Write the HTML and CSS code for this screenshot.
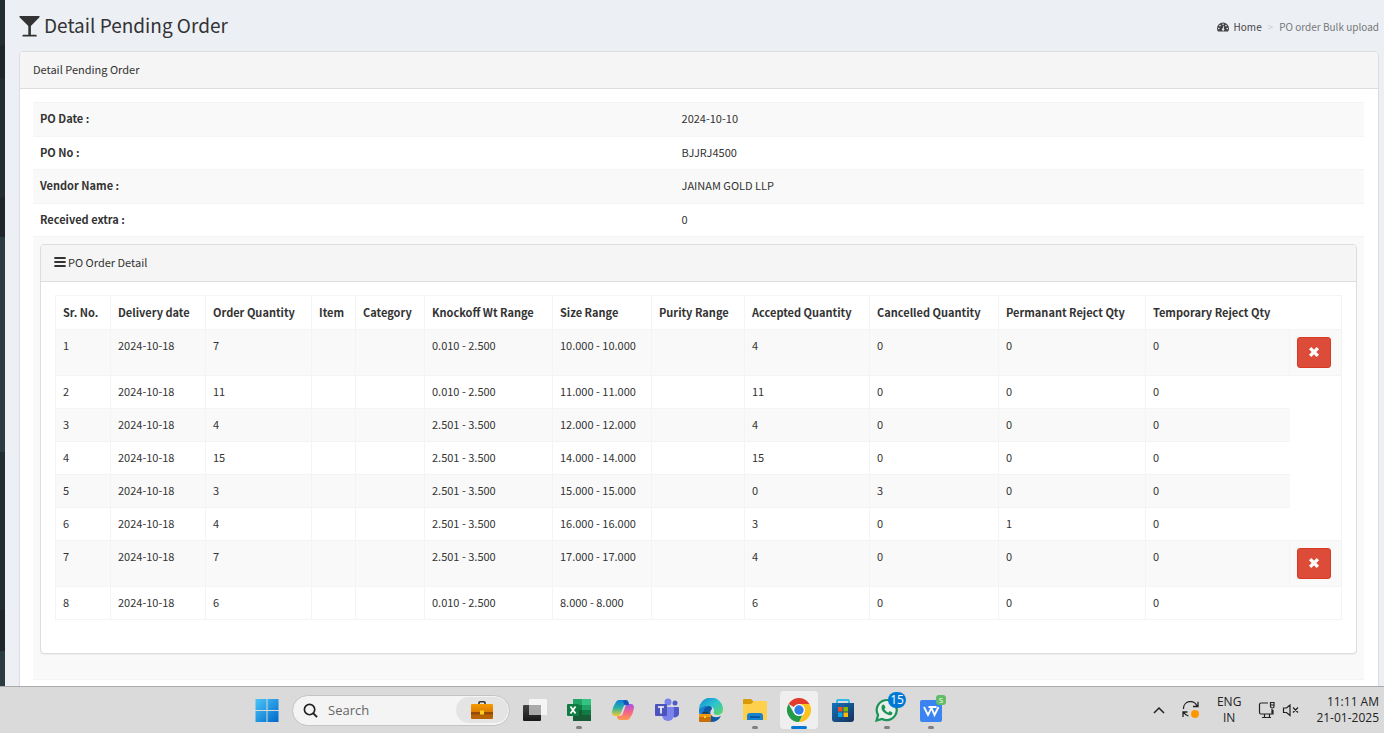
FILE: index.html
```html
<!DOCTYPE html>
<html lang="en">
<head>
    <meta charset="UTF-8">
    <meta name="viewport" content="width=device-width, initial-scale=1.0">
    <title>Detail Pending Order</title>
    <link rel="stylesheet" href="styles.css">
</head>
<body>
    <div class="screen">
        <div class="wrapper">
            <aside class="sidebar">
                <div class="side-item item-1"></div>
                <div class="side-item item-2 active"></div>
                <div class="side-item item-3"></div>
                <div class="side-item item-4 active"></div>
                <div class="side-item item-5 sub"></div>
                <div class="side-item item-6"></div>
                <div class="side-item item-7 active"></div>
                <div class="side-item item-8 sub"></div>
            </aside>
            <main class="content">
                <section class="content-header">
                    <h1>
                        <svg class="icon-glass" viewBox="0 0 20 21"><path d="M0 0h20v1.2L11.4 10v8.8h4.8c.6 0 1 .4 1 1v.7H3v-.7c0-.6.4-1 1-1h4.8V10L0 1.200z" fill="#333"/></svg>
                        Detail Pending Order
                    </h1>
                    <ol class="breadcrumb">
                        <li>
                            <a href="#">
                                <svg class="icon-dash" viewBox="0 0 12 10"><path d="M6 0.500a6 6 0 0 0-6 6c0 1.100.3 2.200.9 3.100h10.200c.6-.9.9-2 .9-3.100a6 6 0 0 0-6-6z" fill="#444"/><g fill="#ecf0f5"><circle cx="1.800" cy="6.500" r=".8"/><circle cx="3" cy="3.600" r=".8"/><circle cx="6" cy="2.300" r=".8"/><circle cx="9" cy="3.600" r=".8"/><circle cx="10.200" cy="6.500" r=".8"/><path d="M6.500 3.800l.6.200-.4 2.400a1.200 1.200 0 1 1-.9-.1z"/></g></svg>
                                Home
                            </a>
                        </li>
                        <li class="current">PO order Bulk upload</li>
                    </ol>
                </section>

                <section class="panel">
                    <div class="panel-heading">Detail Pending Order</div>
                    <div class="panel-body">
                        <table class="info">
                            <tr><th>PO Date :</th><td>2024-10-10</td></tr>
                            <tr><th>PO No :</th><td>BJJRJ4500</td></tr>
                            <tr><th>Vendor Name :</th><td>JAINAM GOLD LLP</td></tr>
                            <tr><th>Received extra :</th><td>0</td></tr>
                        </table>
                        <div class="detail-row">
                            <div class="panel">
                                <div class="panel-heading">
                                    <svg class="icon-bars" viewBox="0 0 12 10"><path d="M.8 0h10.400q.5 0 .5.500v1q0 .5-.5.500H.8q-.5 0-.5-.5v-1Q.3 0 .8 0zM.8 4h10.400q.5 0 .5.500v1q0 .5-.5.500H.8q-.5 0-.5-.5v-1Q.3 4 .8 4zM.8 8h10.400q.5 0 .5.500v1q0 .5-.5.500H.8q-.5 0-.5-.5v-1Q.3 8 .8 8z" fill="#333"/></svg>
                                    PO Order Detail
                                </div>
                                <div class="panel-body order-body">
                                    <table class="orders">
                                        <colgroup>
                                            <col class="c-sr"><col class="c-date"><col class="c-qty"><col class="c-item"><col class="c-cat"><col class="c-knock"><col class="c-size"><col class="c-purity"><col class="c-acc"><col class="c-can"><col class="c-perm"><col class="c-temp"><col class="c-act">
                                        </colgroup>
                                        <thead>
                                            <tr>
                                                <th>Sr. No.</th><th>Delivery date</th><th>Order Quantity</th><th>Item</th><th>Category</th><th>Knockoff Wt Range</th><th>Size Range</th><th>Purity Range</th><th>Accepted Quantity</th><th>Cancelled Quantity</th><th>Permanant Reject Qty</th><th>Temporary Reject Qty</th>
                                            </tr>
                                        </thead>
                                        <tbody>
                                            <tr><td>1</td><td>2024-10-18</td><td>7</td><td></td><td></td><td>0.010 - 2.500</td><td>10.000 - 10.000</td><td></td><td>4</td><td>0</td><td>0</td><td>0</td><td class="action"><button class="btn-danger" type="button" aria-label="Cancel"><svg viewBox="0 0 10 10"><path d="M1.800 1.800l6.400 6.400M8.200 1.800L1.800 8.200" stroke="#fff" stroke-width="2.800"/></svg></button></td></tr>
                                            <tr><td>2</td><td>2024-10-18</td><td>11</td><td></td><td></td><td>0.010 - 2.500</td><td>11.000 - 11.000</td><td></td><td>11</td><td>0</td><td>0</td><td>0</td></tr>
                                            <tr><td>3</td><td>2024-10-18</td><td>4</td><td></td><td></td><td>2.501 - 3.500</td><td>12.000 - 12.000</td><td></td><td>4</td><td>0</td><td>0</td><td>0</td></tr>
                                            <tr><td>4</td><td>2024-10-18</td><td>15</td><td></td><td></td><td>2.501 - 3.500</td><td>14.000 - 14.000</td><td></td><td>15</td><td>0</td><td>0</td><td>0</td></tr>
                                            <tr><td>5</td><td>2024-10-18</td><td>3</td><td></td><td></td><td>2.501 - 3.500</td><td>15.000 - 15.000</td><td></td><td>0</td><td>3</td><td>0</td><td>0</td></tr>
                                            <tr><td>6</td><td>2024-10-18</td><td>4</td><td></td><td></td><td>2.501 - 3.500</td><td>16.000 - 16.000</td><td></td><td>3</td><td>0</td><td>1</td><td>0</td></tr>
                                            <tr><td>7</td><td>2024-10-18</td><td>7</td><td></td><td></td><td>2.501 - 3.500</td><td>17.000 - 17.000</td><td></td><td>4</td><td>0</td><td>0</td><td>0</td><td class="action"><button class="btn-danger" type="button" aria-label="Cancel"><svg viewBox="0 0 10 10"><path d="M1.800 1.800l6.400 6.400M8.200 1.800L1.800 8.200" stroke="#fff" stroke-width="2.800"/></svg></button></td></tr>
                                            <tr><td>8</td><td>2024-10-18</td><td>6</td><td></td><td></td><td>0.010 - 2.500</td><td>8.000 - 8.000</td><td></td><td>6</td><td>0</td><td>0</td><td>0</td></tr>
                                        </tbody>
                                    </table>
                                </div>
                            </div>
                        </div>
                    </div>
                </section>
            </main>
        </div>

        <footer class="taskbar">
            <div class="task-apps">
                <button class="app" type="button" aria-label="Start">
                    <svg viewBox="0 0 24 24"><defs><linearGradient id="win" x1="0" y1="0" x2="24" y2="24" gradientUnits="userSpaceOnUse"><stop offset="0" stop-color="#4cc9fb"/><stop offset="1" stop-color="#0067c8"/></linearGradient></defs><path d="M.5 1h11v11H.5zM12.500 1h11v11h-11zM.5 13h11v11H.5zM12.500 13h11v11h-11z" fill="url(#win)"/></svg>
                </button>
                <div class="search">
                    <svg class="icon-search" viewBox="0 0 16 16"><circle cx="7" cy="7" r="5.500" fill="none" stroke="#222" stroke-width="1.800"/><path d="M11 11l4 4" stroke="#222" stroke-width="2"/></svg>
                    <input type="text" placeholder="Search" aria-label="Search">
                    <span class="search-pill">
                        <svg viewBox="0 0 22 18"><defs><linearGradient id="bag" x1="0" y1="0" x2="0" y2="1"><stop offset="0" stop-color="#f79a00"/><stop offset="1" stop-color="#d97a00"/></linearGradient></defs><path d="M8 3.500V1.500Q8 .8 9 .8h4q1 0 1 .7v2" fill="none" stroke="#333" stroke-width="1.600"/><rect y="3" width="22" height="9" rx="1" fill="url(#bag)"/><path d="M0 11h22v6q0 1-1 1H1q-1 0-1-1z" fill="#b86206"/><path d="M0 11h22v2.500H0z" fill="#974a04"/><rect x="9" y="9.500" width="4" height="4" fill="#ffd21c"/></svg>
                    </span>
                </div>
                <button class="app" type="button" aria-label="Task view">
                    <svg viewBox="0 0 24 24"><defs><linearGradient id="tv" x1="0" y1="0" x2="0" y2="1"><stop offset="0" stop-color="#444"/><stop offset="1" stop-color="#181818"/></linearGradient></defs><rect y="7" width="18" height="16" rx="1" fill="url(#tv)"/><rect x="6" y="1" width="18" height="16" rx="1" fill="#f5f5f5"/><path d="M6 7h12v10H6z" fill="#aaa"/></svg>
                </button>
                <button class="app open" type="button" aria-label="Excel">
                    <svg viewBox="0 0 24 24"><path d="M6 1h9v22H6z" fill="#21a366"/><path d="M15 1h9v6h-9z" fill="#33c481"/><path d="M6 7h9v5H6z" fill="#107c41"/><path d="M15 7h9v5h-9z" fill="#21a366"/><path d="M6 12h9v11H6z" fill="#185c37"/><path d="M15 12h9v5h-9z" fill="#107c41"/><path d="M15 17h9v6h-9z" fill="#185c37"/><rect y="6" width="12" height="12" rx="1" fill="#107c41"/><path d="M3.500 8.500l5 7M8.500 8.500l-5 7" stroke="#fff" stroke-width="1.800"/></svg>
                </button>
                <button class="app" type="button" aria-label="Copilot">
                    <svg viewBox="0 0 24 24"><defs><linearGradient id="cp1" x1="0" y1="0" x2="0" y2="1"><stop offset="0" stop-color="#0a7fe0"/><stop offset=".5" stop-color="#2bb3a0"/><stop offset="1" stop-color="#f5c92e"/></linearGradient><linearGradient id="cp2" x1="0" y1="0" x2="0" y2="1"><stop offset="0" stop-color="#a255e8"/><stop offset=".5" stop-color="#f3638a"/><stop offset="1" stop-color="#ff9a4d"/></linearGradient></defs><path d="M8 2h7q2 0 2.600 2l.8 3H15q-2 0-2.700 2L9.500 16Q8.800 18 7 18H4q-3 0-3-4Q2 8 5 4q1-2 3-2z" fill="url(#cp1)"/><path d="M16 22H9q-2 0-2.600-2L6 18h3q2 0 2.700-2L14.500 8Q15.200 6 17 6h3q3 0 3 4-1 6-4 10-1 2-3 2z" fill="url(#cp2)"/><path d="M14 2q3 0 4 5h-3q-2 0-3-4z" fill="#1753b8"/></svg>
                </button>
                <button class="app" type="button" aria-label="Teams">
                    <svg viewBox="0 0 24 24"><circle cx="13" cy="4" r="3.500" fill="#7b83eb"/><circle cx="20" cy="5" r="2.500" fill="#5059c9"/><path d="M16 9h7q1 0 1 1v5a4 4 0 0 1-7 3z" fill="#5059c9"/><path d="M8 9h10q1 0 1 1v7a6 6 0 0 1-12 0z" fill="#7b83eb"/><rect y="6" width="12" height="12" rx="1" fill="#4b53bc"/><path d="M3 9h6M6 9v6.500" stroke="#fff" stroke-width="1.600"/></svg>
                </button>
                <button class="app" type="button" aria-label="Edge">
                    <svg viewBox="0 0 24 24"><defs><linearGradient id="ed" x1="0" y1="0" x2="1" y2="1"><stop offset="0" stop-color="#1488d4"/><stop offset=".5" stop-color="#2cc3d2"/><stop offset="1" stop-color="#62d957"/></linearGradient></defs><path d="M0 12Q2 7 8 7q5 0 5 4-3 3-1 6 3 4 10 1-3 6-10 6Q1 24 0 12z" fill="#0c59a4"/><path d="M0 12A12 12 0 0 1 24 11q0 6-6 6-4 0-3-3 1-5-5-6-7 0-10 4z" fill="url(#ed)"/><path d="M0 12q3-4 9-4-5 2-5 8H1q-1-2-1-4z" fill="#1b7fd0"/><rect y="16" width="12" height="8" rx="1" fill="#c86f0a"/><path d="M0 16h12v3H0z" fill="#f09810"/><path d="M4 16v-1.500h4V16" fill="none" stroke="#333"/><path d="M5 18h2v2H5z" fill="#ffd21c"/></svg>
                </button>
                <button class="app open" type="button" aria-label="File Explorer">
                    <svg viewBox="0 0 24 24"><path d="M0 2q0-1 1-1h7l3 3v4H0z" fill="#d99a08"/><path d="M11 3h12q1 0 1 1v17q0 1-1 1H1q-1 0-1-1V6h8z" fill="#ffd04c"/><path d="M4 22v-4q0-3 3-3h10q3 0 3 3v4z" fill="#1583cf"/><path d="M7 18h10v2H7z" fill="#075a9d"/></svg>
                </button>
                <button class="app open current-app" type="button" aria-label="Chrome">
                    <svg viewBox="0 0 24 24"><path d="M12 12L1.600 6A12 12 0 0 1 22.400 6z" fill="#e33b2e"/><path d="M12 6h10.400A12 12 0 0 1 12 24l5.200-9z" fill="#fcc31e"/><path d="M1.600 6l5.200 9q2 3 5.200 3 2 0 3.500-1L12 24A12 12 0 0 1 1.600 6z" fill="#229a4a"/><circle cx="12" cy="12" r="6" fill="#fff"/><circle cx="12" cy="12" r="4.700" fill="#3180ea"/></svg>
                </button>
                <button class="app" type="button" aria-label="Store">
                    <svg viewBox="0 0 24 24"><defs><linearGradient id="st" x1="0" y1="0" x2="1" y2="1"><stop offset="0" stop-color="#1474bd"/><stop offset="1" stop-color="#183057"/></linearGradient></defs><path d="M6 6V3q0-1 1-1h10q1 0 1 1v3" fill="none" stroke="#31b8ec" stroke-width="1.800"/><path d="M1 5h22v16q0 3-3 3H4q-3 0-3-3z" fill="url(#st)"/><path d="M7 9h4.500v4.500H7z" fill="#f25022"/><path d="M12.500 9H17v4.500h-4.500z" fill="#7fba00"/><path d="M7 14.500h4.500V19H7z" fill="#00a4ef"/><path d="M12.500 14.500H17V19h-4.500z" fill="#ffb900"/></svg>
                </button>
                <button class="app open" type="button" aria-label="WhatsApp">
                    <svg viewBox="0 0 24 24"><path d="M1.500 22.500l1.600-5.400a10 10 0 1 1 4 3.800z" fill="#e9f0eb" stroke="#1a9256" stroke-width="2.200"/><path d="M7 7.500q1-1.500 2.300-.6l1.200 2.600-1.200 1.600q1.300 2.500 3.900 3.600l1.500-1.600 2.600 1.300q.5 1.600-1 2.500-2 1-5-.8-5-3-4.800-6.600 0-1.200.5-2z" fill="#1a9256"/></svg>
                    <span class="badge">15</span>
                </button>
                <button class="app open" type="button" aria-label="WPS Office">
                    <svg viewBox="0 0 24 24"><rect x="1" y="2" width="22" height="22" rx="2" fill="#3b83f0"/><path d="M5 9l4 8 3.500-7 3 7L19.500 9M9.500 9h8" fill="none" stroke="#fff" stroke-width="1.800"/></svg>
                    <span class="mini-badge">S</span>
                </button>
            </div>
            <div class="tray">
                <svg class="chevron" viewBox="0 0 12 8"><path d="M1 7l5-5 5 5" fill="none" stroke="#222" stroke-width="1.500"/></svg>
                <svg class="sync" viewBox="0 0 18 18"><path d="M1.500 8A7 7 0 0 1 15 5M16 .8V5.500h-5M6.500 15Q3 14 1.500 11M1 16v-5h4.500" fill="none" stroke="#222" stroke-width="1.300"/><circle cx="13" cy="13" r="4" fill="#ff9800"/></svg>
                <div class="lang">ENG<br>IN</div>
                <svg class="net" viewBox="0 0 18 18"><path d="M10 2H3Q1.500 2 1.500 3.500v8Q1.500 13 3 13h12v-4M4 16.500h9M6.500 13v3M11.500 13v3M14 8v5M12.500 1.500h3.500v4q0 1.500-1.700 1.500t-1.800-1.500zM12.500 4H16" fill="none" stroke="#222" stroke-width="1.200"/></svg>
                <svg class="volume" viewBox="0 0 18 14"><path d="M1.500 5v4.500h3L8 12.500V2L4.500 5zM11 4.500l5 5M16 4.500l-5 5" fill="none" stroke="#222" stroke-width="1.200"/></svg>
                <div class="clock">11:11 AM<br>21-01-2025</div>
            </div>
        </footer>
    </div>
</body>
</html>
```
FILE: styles.css
```css
* {
    box-sizing: border-box;
}
body {
    margin: 0;
    font-family: "Noto Sans CJK SC", sans-serif;
    font-size: 11px;
    line-height: 18px;
    color: #333;
    background-color: #ecf0f5;
}
svg {
    display: block;
}
.screen {
    height: 100vh;
    display: flex;
    flex-direction: column;
    overflow: hidden;
}
.wrapper {
    flex: 1;
    min-height: 0;
    display: flex;
    overflow: hidden;
}

/* sidebar */
.sidebar {
    width: 5px;
    flex: none;
    display: flex;
    flex-direction: column;
    background-color: #222d32;
}
.item-1 { height: 45px; }
.item-2 { height: 33px; }
.item-3 { height: 119px; }
.item-4 { height: 40px; }
.item-5 { height: 215px; }
.item-6 { height: 158px; }
.item-7 { height: 41px; }
.item-8 { flex: 1; }
.active { background-color: #1e262c; }
.sub { background-color: #2c3b41; }

/* content */
.content {
    flex: 1;
    min-width: 0;
    padding: 0 5px 0 14px;
}
.content-header {
    height: 51px;
    padding-bottom: 2px;
    display: flex;
    justify-content: space-between;
    align-items: center;
}
h1 {
    display: flex;
    align-items: flex-end;
    gap: 4px;
    margin: 0;
    font-size: 19px;
    font-weight: 400;
    line-height: 24px;
}
.icon-glass {
    width: 21px;
    height: 21px;
}
.breadcrumb {
    display: flex;
    list-style: none;
    margin: 0;
    padding: 4px 0 0;
    font-size: 10px;
}
.breadcrumb a {
    display: flex;
    align-items: center;
    gap: 5px;
    color: #444;
    text-decoration: none;
}
.icon-dash {
    width: 12px;
    height: 10px;
}
.current {
    color: #777;
}
.current::before {
    content: ">";
    padding: 0 6px;
    color: #ccc;
}

.panel {
    background-color: #fff;
    border: 1px solid #ddd;
    border-radius: 4px;
    box-shadow: 0 1px 1px rgba(0, 0, 0, 0.05);
}
.panel-heading {
    display: flex;
    align-items: center;
    gap: 2px;
    height: 37px;
    padding: 0 13px 2px;
    background-color: #f5f5f5;
    border-bottom: 1px solid #ddd;
    border-radius: 3px 3px 0 0;
}
.panel-body {
    padding: 13px 14px 13px 13px;
}
.icon-bars {
    width: 12px;
    height: 10px;
}
table {
    width: 100%;
    border-collapse: collapse;
}
th, td {
    padding: 6px 7px 8px;
    text-align: left;
    vertical-align: top;
}
.info {
    border-collapse: separate;
    border-spacing: 0;
}
.info th, .info td {
    height: 33px;
    border-top: 1px solid #f4f4f4;
}
.info th {
    width: 48.2%;
}
.info tr:nth-child(odd) th,
.info tr:nth-child(odd) td {
    height: 34px;
    background-color: #f9f9f9;
}
.detail-row {
    padding: 7px 7px 25px;
    background-color: #f9f9f9;
    border-top: 1px solid #f4f4f4;
    border-bottom: 1px solid #f4f4f4;
}
.order-body {
    padding: 13px 14px 33px;
}

.orders {
    table-layout: fixed;
    border: 1px solid #f4f4f4;
}
.orders th, .orders td {
    border: 1px solid #f4f4f4;
    white-space: nowrap;
}
.orders th {
    padding: 7px 7px 8px;
}
.orders th:last-child, .orders td:last-child {
    border-right: 0;
}
.orders .action {
    padding: 7px;
}
.orders tbody tr:nth-child(odd) td {
    background-color: #f9f9f9;
}
.c-sr { width: 55px; }
.c-date { width: 95px; }
.c-qty { width: 106px; }
.c-item { width: 44px; }
.c-cat { width: 69px; }
.c-knock { width: 128px; }
.c-size { width: 99px; }
.c-purity { width: 93px; }
.c-acc { width: 125px; }
.c-can { width: 129px; }
.c-perm { width: 147px; }
.c-temp { width: 144px; }

.btn-danger {
    display: flex;
    align-items: center;
    justify-content: center;
    width: 34px;
    height: 31px;
    padding: 0 0 1px;
    background-color: #dd4b39;
    border: 1px solid #d73925;
    border-radius: 3px;
}
.btn-danger svg {
    width: 12px;
    height: 12px;
}

/* taskbar */
.taskbar {
    flex: none;
    height: 47px;
    display: flex;
    justify-content: space-between;
    padding: 0 5px 0 248px;
    background-color: #dadada;
    border-top: 1px solid #aaa;
    font-family: "Open Sans", sans-serif;
    color: #222;
}
.task-apps {
    display: flex;
    align-items: center;
    gap: 6px;
}
.app {
    position: relative;
    width: 38px;
    height: 38px;
    padding: 7px;
    background: none;
    border: 0;
    border-radius: 4px;
}
.open::after {
    content: "";
    position: absolute;
    left: 16px;
    bottom: 0;
    width: 6px;
    height: 3px;
    border-radius: 2px;
    background-color: #808080;
}
.current-app {
    background-color: #efefef;
}
.current-app::after {
    left: 11px;
    width: 16px;
    background-color: #0078d4;
}
.badge {
    position: absolute;
    top: 1px;
    right: 0;
    width: 18px;
    height: 16px;
    border-radius: 8px;
    background-color: #0078d4;
    color: #fff;
    font: 12px/16px "Open Sans", sans-serif;
}
.mini-badge {
    position: absolute;
    top: 4px;
    right: 4px;
    width: 10px;
    height: 10px;
    border-radius: 3px;
    background-color: #62bd67;
    color: #fff;
    font: 8px/10px "Open Sans", sans-serif;
}
.search {
    display: flex;
    align-items: center;
    width: 218px;
    height: 31px;
    padding: 0 1px 0 10px;
    background-color: #f4f4f4;
    border: 1px solid #c4c4c4;
    border-radius: 16px;
}
.icon-search {
    flex: none;
    width: 15px;
    height: 15px;
}
.search input {
    flex: 1;
    min-width: 0;
    padding: 0 10px;
    border: 0;
    background: none;
    font: 13px "Open Sans", sans-serif;
}
.search input::placeholder {
    color: #666;
}
.search-pill {
    display: flex;
    align-items: center;
    justify-content: center;
    width: 52px;
    height: 26px;
    border-radius: 13px;
    background-color: #e4e4e4;
}
.search-pill svg {
    width: 22px;
    height: 18px;
}
.tray {
    display: flex;
    align-items: center;
    font-size: 12px;
    line-height: 16px;
}
.chevron {
    width: 12px;
    height: 8px;
    margin-right: 17px;
}
.sync {
    width: 18px;
    height: 18px;
    margin-right: 17px;
}
.lang {
    margin-right: 17px;
    text-align: center;
}
.net {
    width: 18px;
    height: 18px;
    margin-right: 6px;
}
.volume {
    width: 18px;
    height: 14px;
    margin-right: 16px;
}
.clock {
    text-align: right;
}
```
